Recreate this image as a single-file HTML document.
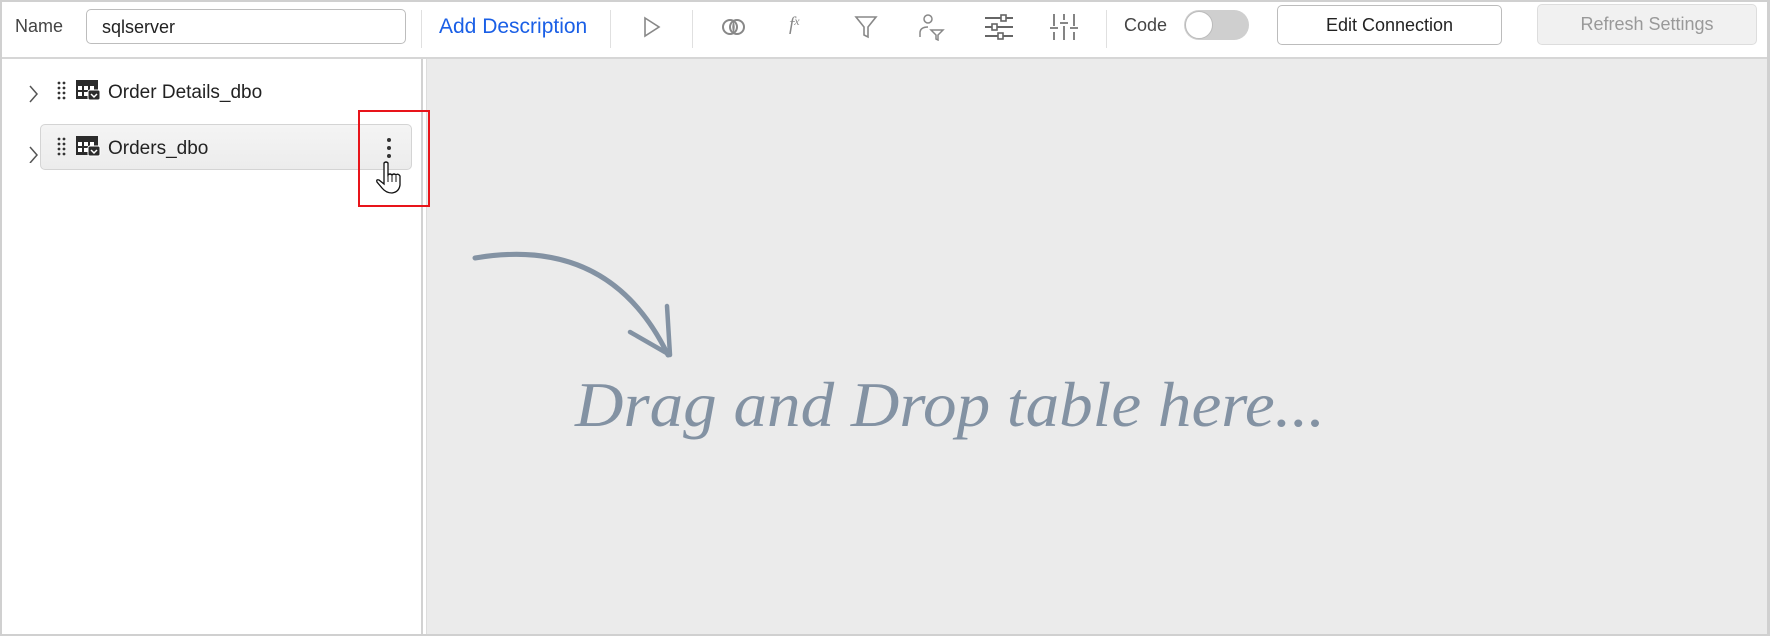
<!DOCTYPE html>
<html><head><meta charset="utf-8"><style>
*{box-sizing:border-box;margin:0;padding:0}
body{width:1770px;height:636px;overflow:hidden;background:#fff;font-family:"Liberation Sans",sans-serif;position:relative}
.a{position:absolute}
.frame{left:0;top:0;width:1770px;height:636px;border:2px solid #d0d0d0;border-right-width:3px;border-bottom-width:2px}
.sep{width:1px;background:#e0e0e0;top:10px;height:38px}
.txt{font-size:18px;color:#333;white-space:nowrap}
</style></head><body>
<div class="a" style="left:0;top:58px;width:1770px;height:578px;background:#ebebeb"></div>
<div class="a" style="left:0;top:58px;width:421px;height:578px;background:#fff"></div>
<div class="a" style="left:421px;top:58px;width:2px;height:578px;background:#d2d2d2"></div>
<div class="a" style="left:423px;top:58px;width:3px;height:578px;background:#fff"></div>
<div class="a" style="left:426px;top:58px;width:1px;height:578px;background:#ddd"></div>
<div class="a" style="left:0;top:57px;width:1770px;height:2px;background:#d6d6d6"></div>

<div class="a txt" style="left:15px;top:16px;color:#444">Name</div>
<div class="a" style="left:86px;top:9px;width:320px;height:35px;border:1px solid #bdbdbd;border-radius:5px"></div>
<div class="a txt" style="left:102px;top:17px;color:#222">sqlserver</div>
<div class="a sep" style="left:421px"></div>
<div class="a" style="left:439px;top:15px;font-size:21px;color:#1a5fe6;white-space:nowrap">Add Description</div>
<div class="a sep" style="left:610px"></div>
<svg class="a" style="left:642px;top:15px" width="20" height="24" viewBox="0 0 20 24"><path d="M3 3 L17 12 L3 21 Z" fill="none" stroke="#888" stroke-width="1.6"/></svg>
<div class="a sep" style="left:692px"></div>
<svg class="a" style="left:720px;top:15px" width="28" height="24"><circle cx="10" cy="12" r="7" fill="none" stroke="#888" stroke-width="2"/><circle cx="17" cy="12" r="7" fill="none" stroke="#888" stroke-width="2"/><path d="M13.5 6 Q11 12 13.5 18 Q16 12 13.5 6Z" fill="#888"/></svg>
<div class="a" style="left:789px;top:14px;font-size:19px;color:#888;font-family:'Liberation Serif',serif;font-style:italic">f<span style="font-size:12px;vertical-align:5px">x</span></div>
<svg class="a" style="left:854px;top:14px" width="24" height="26"><path d="M2 3 H22 L14 13 V23 L10 21 V13 Z" fill="none" stroke="#888" stroke-width="1.6"/></svg>
<svg class="a" style="left:918px;top:13px" width="28" height="28"><circle cx="10" cy="6" r="4" fill="none" stroke="#888" stroke-width="1.5"/><path d="M2 24 V20 Q2 14 10 14" fill="none" stroke="#888" stroke-width="1.5"/><path d="M13 17 H25 L20 22 V27 L18 26 V22Z" fill="none" stroke="#888" stroke-width="1.5"/></svg>
<svg class="a" style="left:984px;top:13px" width="30" height="28"><g stroke="#666" stroke-width="2"><path d="M1 5H29M1 14H29M1 23H29"/></g><g fill="#fff" stroke="#666" stroke-width="1.6"><rect x="17" y="2" width="5" height="6"/><rect x="8" y="11" width="5" height="6"/><rect x="14" y="20" width="5" height="6"/></g></svg>
<svg class="a" style="left:1050px;top:12px" width="28" height="30"><g stroke="#777" stroke-width="1.8"><path d="M4 2V14M4 20V28M14 2V8M14 14V28M24 2V14M24 20V28M0 16H8M10 11H18M20 16H28"/></g></svg>
<div class="a sep" style="left:1106px"></div>
<div class="a txt" style="left:1124px;top:15px;color:#444">Code</div>
<div class="a" style="left:1184px;top:10px;width:65px;height:30px;border-radius:15px;background:#cfcfcf"></div>
<div class="a" style="left:1185px;top:11px;width:28px;height:28px;border-radius:50%;background:#fff;border:1px solid #bbb"></div>
<div class="a" style="left:1277px;top:5px;width:225px;height:40px;border:1px solid #bcbcbc;border-radius:5px;font-size:18px;color:#222;text-align:center;line-height:38px">Edit Connection</div>
<div class="a" style="left:1537px;top:4px;width:220px;height:41px;border:1px solid #ddd;border-radius:5px;background:#f1f1f1;font-size:18px;color:#999;text-align:center;line-height:39px">Refresh Settings</div>

<div class="a" style="left:40px;top:124px;width:372px;height:46px;border:1px solid #d4d4d4;border-radius:5px;background:linear-gradient(#f4f4f4,#ececec)"></div>
<svg class="a" style="left:28px;top:83px" width="12" height="80"><path d="M2 3 L9 11 L2 19 M2 64 L9 72 L2 80" fill="none" stroke="#555" stroke-width="1.5"/></svg>
<svg class="a" style="left:57px;top:81px" width="10" height="80"><g fill="#333"><circle cx="2" cy="2" r="1.4"/><circle cx="7" cy="2" r="1.4"/><circle cx="2" cy="7" r="1.4"/><circle cx="7" cy="7" r="1.4"/><circle cx="2" cy="12" r="1.4"/><circle cx="7" cy="12" r="1.4"/><circle cx="2" cy="17" r="1.4"/><circle cx="7" cy="17" r="1.4"/><g transform="translate(0,56)"><circle cx="2" cy="2" r="1.4"/><circle cx="7" cy="2" r="1.4"/><circle cx="2" cy="7" r="1.4"/><circle cx="7" cy="7" r="1.4"/><circle cx="2" cy="12" r="1.4"/><circle cx="7" cy="12" r="1.4"/><circle cx="2" cy="17" r="1.4"/><circle cx="7" cy="17" r="1.4"/></g></g></svg>
<svg class="a" style="left:76px;top:80px" width="26" height="80"><g id="t"><rect x="0" y="0" width="22" height="19" fill="#2b2b2b"/><g fill="#fff"><rect x="2" y="6" width="4" height="4"/><rect x="8" y="6" width="4" height="4"/><rect x="14" y="6" width="4" height="4"/><rect x="2" y="12" width="4" height="4"/><rect x="8" y="12" width="4" height="4"/></g><rect x="12" y="10" width="12" height="10" rx="2" fill="#2b2b2b" stroke="#fff"/><path d="M15 14 L18 17 L21 14" stroke="#fff" stroke-width="1.5" fill="none"/></g><use href="#t" y="56"/></svg>
<div class="a txt" style="left:108px;top:82px;color:#222;font-size:19px">Order Details_dbo</div>
<div class="a txt" style="left:108px;top:138px;color:#222;font-size:19px">Orders_dbo</div>
<svg class="a" style="left:385px;top:136px" width="8" height="24"><g fill="#333"><circle cx="4" cy="4" r="2"/><circle cx="4" cy="12" r="2"/><circle cx="4" cy="20" r="2"/></g></svg>
<svg class="a" style="left:376px;top:161px" width="26" height="34"><path d="M8 2 Q10 0 12 2 V14 Q14 12 16 14 Q18 12 20 14 Q22 12 24 15 V24 Q23 31 16 32 Q10 32 6 27 L1 21 Q0 18 3 19 L8 23 Z" fill="#fff" stroke="#111" stroke-width="1.3"/><path d="M12 14 V21 M16 14 V21 M20 15 V21" stroke="#111" stroke-width="1"/></svg>
<div class="a" style="left:358px;top:110px;width:72px;height:97px;border:2px solid #e8141a"></div>

<svg class="a" style="left:440px;top:230px" width="920" height="230">
<path d="M35 28 Q170 5 228 125" fill="none" stroke="#8392a3" stroke-width="5" stroke-linecap="round"/>
<path d="M227 76 L230 125 L190 102" fill="none" stroke="#8392a3" stroke-width="4.5" stroke-linecap="round" stroke-linejoin="round"/>
<text x="135" y="196" textLength="750" lengthAdjust="spacingAndGlyphs" font-family="Liberation Serif, serif" font-style="italic" font-size="64" fill="#8392a3">Drag and Drop table here...</text>
</svg>
<div class="a frame"></div>
</body></html>
